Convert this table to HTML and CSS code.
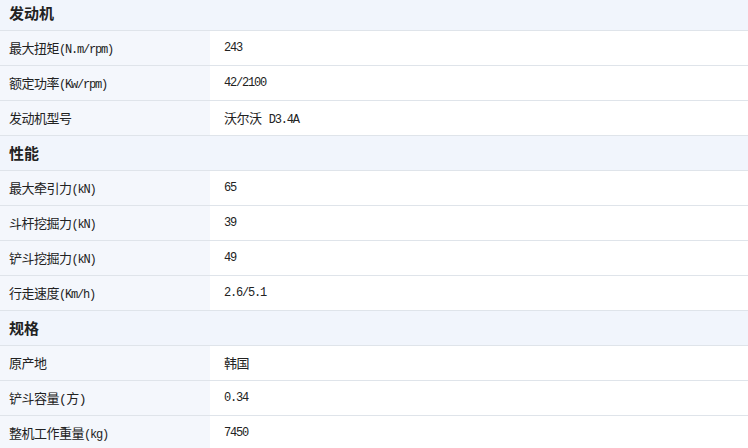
FILE: index.html
```html
<!DOCTYPE html>
<html lang="zh-CN">
<head>
    <meta charset="UTF-8">
    <meta name="viewport" content="width=device-width, initial-scale=1.0">
    <title>参数</title>
    <link rel="stylesheet" href="styles.css">
</head>
<body>
    <table class="spec">
        <tr class="group"><th colspan="2">发动机</th></tr>
        <tr><td class="name">最大扭矩<span class="num">(N.m/rpm)</span></td><td class="val num">243</td></tr>
        <tr><td class="name">额定功率<span class="num">(Kw/rpm)</span></td><td class="val num">42/2100</td></tr>
        <tr><td class="name">发动机型号</td><td class="val">沃尔沃 <span class="num">D3.4A</span></td></tr>
        <tr class="group"><th colspan="2">性能</th></tr>
        <tr><td class="name">最大牵引力<span class="num">(kN)</span></td><td class="val num">65</td></tr>
        <tr><td class="name">斗杆挖掘力<span class="num">(kN)</span></td><td class="val num">39</td></tr>
        <tr><td class="name">铲斗挖掘力<span class="num">(kN)</span></td><td class="val num">49</td></tr>
        <tr><td class="name">行走速度<span class="num">(Km/h)</span></td><td class="val num">2.6/5.1</td></tr>
        <tr class="group"><th colspan="2">规格</th></tr>
        <tr><td class="name">原产地</td><td class="val">韩国</td></tr>
        <tr><td class="name">铲斗容量(方)</td><td class="val num">0.34</td></tr>
        <tr><td class="name">整机工作重量<span class="num">(kg)</span></td><td class="val num">7450</td></tr>
    </table>
</body>
</html>
```

FILE: styles.css
```css
body {
    margin: 0;
    background-color: #fff;
    font-family: "Liberation Mono", "Noto Sans CJK SC", monospace;
    color: #222;
    overflow: hidden;
}
.spec {
    width: 100%;
    margin-top: -5px;
    border-collapse: collapse;
}
.spec tr {
    height: 35px;
}
.spec td, .spec th {
    padding: 0;
    border-bottom: 1px solid #dfe4ea;
}
.group th {
    background-color: #f1f5fc;
    text-align: left;
    padding-left: 9px;
    font-family: "Noto Sans CJK SC", sans-serif;
    font-size: 15px;
    font-weight: bold;
}
.name {
    width: 201px;
    padding-left: 9px !important;
    background-color: #f4f7fc;
    font-size: 13px;
    letter-spacing: -0.5px;
}
.val {
    padding-left: 14px !important;
    background-color: #fff;
    font-size: 13px;
    letter-spacing: -0.5px;
}
.num {
    font-size: 12px;
    letter-spacing: -1.2px;
}
```
